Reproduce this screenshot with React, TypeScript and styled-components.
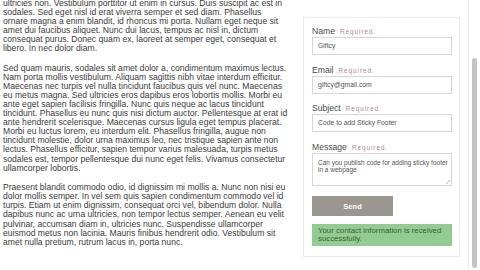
import styled, { createGlobalStyle } from 'styled-components';

const GlobalStyle = createGlobalStyle`
  html, body {
    margin: 0;
    padding: 0;
    background: #ffffff;
    overflow: hidden;
  }
  body {
    font-family: 'Liberation Sans', Arial, sans-serif;
  }
`;

const paragraphs: string[][] = [
  [
    'ultricies non. Vestibulum porttitor ut enim in cursus. Duis suscipit ac est in',
    'sodales. Sed eget nisl id erat viverra semper et sed diam. Phasellus',
    'ornare magna a enim blandit, id rhoncus mi porta. Nullam eget neque sit',
    'amet dui faucibus aliquet. Nunc dui lacus, tempus ac nisl in, dictum',
    'consequat purus. Donec quam ex, laoreet at semper eget, consequat et',
    'libero. In nec dolor diam.',
  ],
  [
    'Sed quam mauris, sodales sit amet dolor a, condimentum maximus lectus.',
    'Nam porta mollis vestibulum. Aliquam sagittis nibh vitae interdum efficitur.',
    'Maecenas nec turpis vel nulla tincidunt faucibus quis vel nunc. Maecenas',
    'eu metus magna. Sed ultricies eros dapibus eros lobortis mollis. Morbi eu',
    'ante eget sapien facilisis fringilla. Nunc quis neque ac lacus tincidunt',
    'tincidunt. Phasellus eu nunc quis nisi dictum auctor. Pellentesque at erat id',
    'ante hendrerit scelerisque. Maecenas cursus ligula eget tempus placerat.',
    'Morbi eu luctus lorem, eu interdum elit. Phasellus fringilla, augue non',
    'tincidunt molestie, dolor urna maximus leo, nec tristique sapien ante non',
    'lectus. Phasellus efficitur, sapien tempor varius malesuada, turpis metus',
    'sodales est, tempor pellentesque dui nunc eget felis. Vivamus consectetur',
    'ullamcorper lobortis.',
  ],
  [
    'Praesent blandit commodo odio, id dignissim mi mollis a. Nunc non nisi eu',
    'dolor mollis semper. In vel sem quis sapien condimentum commodo vel id',
    'turpis. Etiam ut enim dignissim, consequat orci vel, bibendum dolor. Nulla',
    'dapibus nunc ac urna ultricies, non tempor lectus semper. Aenean eu velit',
    'pulvinar, accumsan diam in, ultricies nunc. Suspendisse ullamcorper',
    'euismod metus non lacinia. Mauris finibus hendrerit odio. Vestibulum sit',
    'amet nulla pretium, rutrum lacus in, porta nunc.',
  ],
];

const fields = [
  { label: 'Name', value: 'Giftcy' },
  { label: 'Email', value: 'giftcy@gmail.com' },
  { label: 'Subject', value: 'Code to add Sticky Footer' },
];

function App() {
  return (
    <>
      <GlobalStyle />
      <Page>
        <Article>
          {paragraphs.map((lines, i) => (
            <Paragraph key={i}>
              {lines.map((line, j) => (
                <Line key={j}>{line}</Line>
              ))}
            </Paragraph>
          ))}
        </Article>

        <Sidebar>
          <FormColumn>
            <Card>
              {fields.map((f) => (
                <Field key={f.label}>
                  <Label>
                    {f.label}
                    <Required>Required.</Required>
                  </Label>
                  <Input>{f.value}</Input>
                </Field>
              ))}
              <Field>
                <Label>
                  Message
                  <Required>Required.</Required>
                </Label>
                <TextArea>
                  Can you publish code for adding sticky footer
                  <br />
                  in a webpage
                  <Grip />
                </TextArea>
              </Field>
              <SendButton>Send</SendButton>
              <Success>Your contact information is received successfully.</Success>
            </Card>
          </FormColumn>
          <ScrollTrack>
            <Thumb />
          </ScrollTrack>
        </Sidebar>
      </Page>
    </>
  );
}

export default App;

const Page = styled.div`
  display: flex;
  width: 480px;
  height: 270px;
  overflow: hidden;
`;

const Article = styled.div`
  width: 288px;
  flex-shrink: 0;
  padding-left: 3px;
  margin-top: -1.5px;
  color: #3c3c3c;
  font-size: 8.6px;
  line-height: 9.1px;
`;

const Paragraph = styled.p`
  margin: 0 0 10.5px;
`;

const Line = styled.span`
  display: block;
  white-space: nowrap;
`;

const Sidebar = styled.div`
  flex: 1;
  display: flex;
`;

const FormColumn = styled.div`
  flex: 1;
  padding: 17px 0 0 12px;
`;

const Card = styled.div`
  width: 140px;
  border: 1px solid #ebebeb;
  padding: 8px 7px 10px 8px;
  display: flex;
  flex-direction: column;
`;

const Field = styled.div`
  display: flex;
  flex-direction: column;
  margin-bottom: 9.7px;
`;

const Label = styled.div`
  font-size: 8.6px;
  line-height: 11px;
  color: #4a4a4a;
  display: flex;
  align-items: baseline;
`;

const Required = styled.span`
  margin-left: 5px;
  font-size: 6.3px;
  letter-spacing: 1px;
  color: #b38585;
`;

const Input = styled.div`
  height: 18px;
  box-sizing: border-box;
  border: 1px solid #e3d2d2;
  padding: 0 5px;
  font-size: 6.8px;
  line-height: 16px;
  color: #555;
`;

const TextArea = styled.div`
  position: relative;
  height: 33px;
  box-sizing: border-box;
  border: 1px solid #e3d2d2;
  padding: 5px 2px 0 5px;
  font-size: 6.5px;
  line-height: 7.2px;
  color: #555;
  white-space: nowrap;
`;

const Grip = styled.span`
  position: absolute;
  right: 1px;
  bottom: 1px;
  width: 4px;
  height: 4px;
  background: linear-gradient(135deg, transparent 45%, #bbb 45%, #bbb 55%, transparent 55%);
`;

const SendButton = styled.div`
  margin-top: 0.3px;
  width: 81px;
  height: 20px;
  background: #9c9690;
  color: #ffffff;
  font-size: 7.6px;
  font-weight: bold;
  display: flex;
  align-items: center;
  justify-content: center;
`;

const Success = styled.div`
  margin-top: 8px;
  height: 22px;
  box-sizing: border-box;
  background: #92cc92;
  color: #3a5e3a;
  font-size: 7.8px;
  line-height: 8.6px;
  padding: 2.5px 3px 0 6px;
`;

const ScrollTrack = styled.div`
  width: 11px;
  margin-left: 8px;
  border-left: 1px solid #ededed;
  padding: 58px 0 2px 3px;
  display: flex;
`;

const Thumb = styled.div`
  width: 5px;
  border-radius: 3px;
  background: #c4c4c4;
`;
